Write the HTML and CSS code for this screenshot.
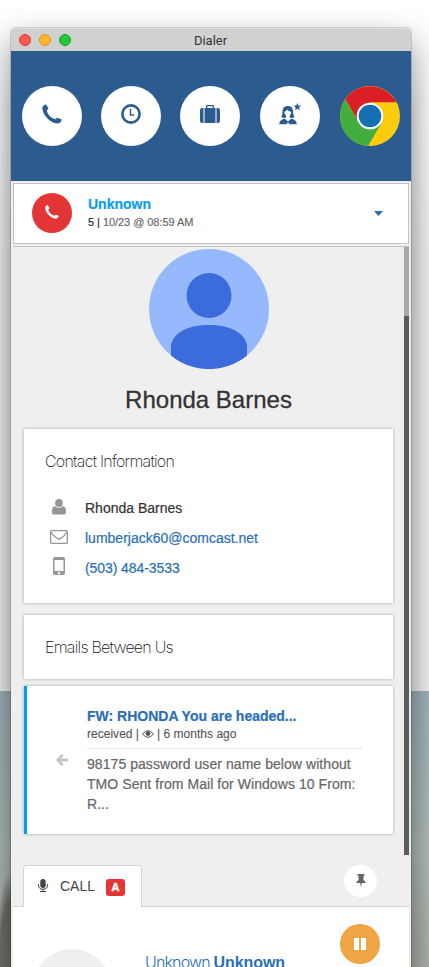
FILE: index.html
```html
<!DOCTYPE html>
<html lang="en">
<head>
<meta charset="utf-8">
<title>Dialer</title>
<link rel="stylesheet" href="styles.css">
</head>
<body>
<svg class="defs" width="0" height="0" aria-hidden="true">
  <symbol id="phone" viewBox="0 0 20 20"><path d="M.4 3.2C.7 2 2.200 .8 3.300 .5Q3.900 .3 4.400 1L6.300 4Q6.700 4.700 6 5.200L4.700 6.300Q5 9 7.600 11.900Q10.500 14.700 13.200 15.200L14.500 14.200Q15 13.700 15.700 13.900L19.300 15.200Q19.900 15.600 19.500 16.400C18.800 18.200 17.100 19.700 15 19.500C11.700 19.200 8 17 5 13.900C2 10.800 0 6.700 .4 3.200Z"/></symbol>
</svg>
<main class="window">
  <header class="titlebar">
    <div class="lights"><i class="red"></i><i class="yellow"></i><i class="green"></i></div>
    <span>Dialer</span>
  </header>
  <nav class="toolbar">
    <a class="tool"><svg width="20" height="20"><use href="#phone"/></svg></a>
    <a class="tool"><svg width="20" height="20" viewBox="0 0 20 20" fill="none" stroke="currentColor"><circle cx="10" cy="10" r="8.600" stroke-width="2.600"/><path d="M9.500 5v6H13" stroke-width="1.500"/></svg></a>
    <a class="tool case"><svg width="20" height="18" viewBox="0 0 20 18"><path d="M6 3V1.200Q6 0 7.200 0h5.600Q14 0 14 1.200V3h1.500v15h-11V3zM7.300 1.300V3h5.400V1.300zM3.500 3v15H2.300Q0 18 0 15.700V5.300Q0 3 2.300 3zM16.500 3h1.200Q20 3 20 5.300v10.400Q20 18 17.700 18h-1.200z"/></svg></a>
    <a class="tool agent"><svg width="22" height="22" viewBox="0 0 22 22"><path d="M18.300 0l1.100 2.400 2.600.3-1.900 1.800.6 2.600-2.400-1.300-2.300 1.300.6-2.600-1.900-1.800 2.500-.3zM8.800 3c3.600 0 5.200 2.200 5.300 5.500.1 2.600.5 4 1.500 5-.8 1.500-3 1.800-4.900 1v-2c1-1 1.500-2.200 1.500-3.700C10.500 8.500 8.800 7.700 8 6.500 7.500 7.700 6.500 8.500 5.400 8.800c0 1.500.5 2.700 1.600 3.700v2c-1.900.8-4 .5-4.800-1C3.300 12.500 3.500 11 3.500 8.500 3.700 5.200 5.300 3 8.800 3zM5.500 15.500L9 18.500l3.500-3 3.200 1.400Q17.800 18 17.800 21.300h-7.300L9 19.300l-1.500 2H.2Q.2 18 2.300 16.900z"/></svg></a>
    <a class="chrome"><svg width="60" height="60" viewBox="0 0 60 60"><circle cx="30" cy="30" r="30" fill="#fdcc0d"/><path d="M5.200 13.200A30 30 0 0 1 56.500 16.300H30L18 35z" fill="#dc1f26"/><path d="M5.200 13.200A30 30 0 0 0 28 60L41 38 18 35z" fill="#43ae3f"/><circle cx="30" cy="30" r="13.300" fill="#fff"/><circle cx="30" cy="30" r="11.300" fill="#146fb3"/></svg></a>
  </nav>
  <section class="recent">
    <div class="dial"><svg width="14" height="14"><use href="#phone"/></svg></div>
    <div class="recent-text"><strong>Unknown</strong><p><b>5 |</b> 10/23 @ 08:59 AM</p></div>
    <svg class="caret" width="9" height="5" viewBox="0 0 9 5"><path d="M0 0h9L4.500 5z"/></svg>
  </section>
  <div class="scroller">
    <div class="content">
      <svg class="avatar" width="120" height="120" viewBox="0 0 120 120"><circle cx="60" cy="60" r="60" fill="#95b9fc"/><circle cx="60" cy="46.500" r="22.500" fill="#3b6bdc"/><path d="M22 106.500V97C24 83 40 76 60 76s36 7 38 21v9.500A60 60 0 0 1 22 106.500z" fill="#3b6bdc"/></svg>
      <h1>Rhonda Barnes</h1>
      <section class="card contact">
        <h2>Contact Information</h2>
        <div class="row"><span class="ico"><svg class="user" width="14" height="16" viewBox="0 0 14 16"><circle cx="7" cy="4" r="3.900"/><path d="M3 7.200Q7 10.500 11 7.200Q14 7.500 14 12.700Q14 15.500 11.500 15.500h-9Q0 15.500 0 12.700Q0 7.500 3 7.200z"/></svg></span><span>Rhonda Barnes</span></div>
        <div class="row"><span class="ico"><svg class="envelope" width="18" height="14" viewBox="0 0 18 14" fill="none" stroke="currentColor" stroke-width="1.300"><rect x=".65" y=".65" width="16.700" height="12.700" rx="1.200"/><path d="M.8 2C3 5.500 7 9 9 9s6-3.500 8.200-7"/></svg></span><a>lumberjack60@comcast.net</a></div>
        <div class="row"><span class="ico"><svg class="mobile" width="12" height="18" viewBox="0 0 12 18"><path fill-rule="evenodd" d="M2 0h8q2 0 2 2v14q0 2-2 2H2q-2 0-2-2V2Q0 0 2 0zM1.500 3v11h9V3zM6 14.900a1.200 1.200 0 1 0 .01 0z"/></svg></span><a class="number">(503) 484-3533</a></div>
      </section>
      <section class="card emails"><h2>Emails Between Us</h2></section>
      <article class="card mail">
        <svg class="arrow" width="12" height="12" viewBox="0 0 12 12" fill="none" stroke="currentColor" stroke-width="2.500"><path d="M6.700 .9L1.700 6l5 5.100M2 6h10"/></svg>
        <div class="mail-body">
          <h3>FW: RHONDA You are headed...</h3>
          <p class="meta">received | <svg width="12" height="8" viewBox="0 0 12 8"><path d="M.5 4Q6-2.600 11.500 4Q6 10.600 .5 4z" fill="none" stroke="currentColor"/><circle cx="6" cy="3.600" r="2.400"/></svg> | 6 months ago</p>
          <p class="excerpt">98175 password user name below without TMO Sent from Mail for Windows 10 From: R...</p>
        </div>
      </article>
    </div>
    <div class="track"><div class="thumb"></div></div>
  </div>
  <div class="tabs">
    <div class="tab"><svg width="10" height="13" viewBox="0 0 10 13"><rect x="2.300" width="5.400" height="9" rx="2.700"/><path d="M.6 5v1.500Q.6 10.200 5 10.200T9.400 6.500V5M5 10v2.500M2 12.500h6" fill="none" stroke="currentColor"/></svg><span>CALL</span><em>A</em></div>
    <div class="pin"><svg width="10" height="14" viewBox="0 0 10 14"><path d="M1.500 0h7v1.400l-1 .5v4Q9.500 6.800 9.700 9H5.800L5 13.500 4.200 9H.3Q.5 6.800 2.500 5.900v-4l-1-.5z"/></svg></div>
  </div>
  <section class="call">
    <div class="face"></div>
    <p class="caller">Unknown <strong>Unknown</strong></p>
    <div class="pause"><i></i><i></i></div>
  </section>
</main>
</body>
</html>
```
FILE: styles.css
```css
* { box-sizing: border-box; }
body {
  margin: 0; height: 967px; padding: 28px 18px 0 11px; overflow: hidden;
  font: 14px/20px "Liberation Sans", Arial, sans-serif; color: #333;
  background:
    linear-gradient(#fff 0 80px, #f6f6f6 250px) top / 100% 691px no-repeat,
    radial-gradient(16px 95px at 11px 967px, #74746e 70%, transparent),
    linear-gradient(#a3b6bd 691px, #b4c0bc 850px, #aeb3a9 967px);
}
h1, h2, h3, p { margin: 0; }
svg { display: block; fill: currentColor; flex: none; }
svg[fill="none"] { fill: none; }
.defs { position: absolute; }
.window {
  width: 400px; height: 939px; background: #efefef; border-radius: 5px 5px 0 0;
  box-shadow: 0 0 0 1px rgba(0,0,0,.15), 0 16px 34px 2px rgba(0,0,0,.42), 0 60px 20px 0 rgba(0,0,0,.1);
}
.titlebar {
  height: 23px; background: #d1d1d1; border-radius: 5px 5px 0 0; display: grid;
  grid-template-columns: 1fr auto 1fr; align-items: center; padding: 0 9px 0 8px;
  font: 13px/23px Roboto, sans-serif; color: #333; box-shadow: inset 0 1px #ddd;
}
.titlebar span { padding-top: 1px; }
.lights { display: flex; gap: 8px; }
.lights i { width: 12px; height: 12px; border-radius: 50%; border: 1px solid #df3e39; background: #ff5850; }
.lights .yellow { background: #ffb72a; border-color: #dd961b; }
.lights .green { background: #25c638; border-color: #18a229; }
.toolbar {
  height: 130px; background: #2c5c8f; color: #2c5c8f; display: flex;
  align-items: center; gap: 19px; padding: 0 11px;
}
.tool { width: 60px; height: 60px; border-radius: 50%; background: #fff; display: grid; place-items: center; padding-bottom: 4px; }
.tool.case, .tool.agent { margin-right: 1px; }
.recent {
  margin: 2px 2px 2px; height: 61px; border: 1px solid #c3c3c3; background: #fff;
  display: flex; align-items: center; padding: 0 25px 0 18px;
}
.dial { width: 40px; height: 40px; border-radius: 50%; background: #e33535; color: #fff; display: grid; place-items: center; padding-bottom: 2px; margin-bottom: 1px; }
.recent-text { margin: 0 0 1px 16px; flex: 1; }
.recent-text strong { display: block; color: #0a9df0; font-size: 14px; line-height: 19px; -webkit-text-stroke: .2px; }
.recent-text p { font-size: 11px; line-height: 17px; color: #666; letter-spacing: -.05px; -webkit-text-stroke: .15px; }
.recent-text b { font-weight: 400; color: #222; }
.caret { color: #2b6fb2; }
.scroller { margin: 0 2px; height: 609px; border-top: 1px solid #c3c3c3; display: flex; }
.content { width: 391px; padding: 2px 11px 0; }
.avatar { margin: 0 auto; }
h1 { font-size: 24px; line-height: 30px; font-weight: 400; text-align: center; margin: 16px 0 14px; -webkit-text-stroke: .3px #333; }
.card { background: #fff; box-shadow: 0 0 3px rgba(0,0,0,.3); }
.contact { height: 174px; padding: 22px 21px; }
h2 { font: 200 16px/20px Inter, sans-serif; letter-spacing: -.75px; color: #111; }
.contact h2 { margin-bottom: 22px; }
.row { height: 30px; display: flex; align-items: center; -webkit-text-stroke: .2px; }
.ico { width: 28px; margin-right: 12px; color: #969696; display: grid; place-items: center; -webkit-text-stroke: 0; }
.user, .envelope { margin-bottom: 2px; }
.mobile { margin-bottom: 4px; }
.row a { color: #2a6fb5; }
.row .number { letter-spacing: -.08px; }
.emails { height: 64px; margin-top: 12px; padding: 22px 21px; }
.mail { height: 148px; margin-top: 7px; border-left: 3px solid #009ff2; padding: 20px 30px 0 29px; display: flex; }
.arrow { color: #c0c0c0; margin: 48px 19px 0 0; }
.mail-body { flex: 1; }
h3 { font-size: 14px; line-height: 20px; color: #2a6fb5; white-space: nowrap; -webkit-text-stroke: .2px; }
.meta { display: flex; align-items: center; gap: 3px; font-size: 12px; line-height: 16px; padding-bottom: 6px; color: #555; border-bottom: 1px solid #e7e7e7; -webkit-text-stroke: .1px; letter-spacing: .02px; }
.excerpt { width: 276px; color: #666; padding-top: 5px; letter-spacing: .06px; -webkit-text-stroke: .2px; }
.track { width: 5px; background: #5b5b5b; }
.thumb { height: 69px; background: #a8a8a8; }
.tabs { margin: 10px 2px 0; height: 42px; padding: 0 32px 0 10px; display: flex; justify-content: space-between; box-shadow: inset 0 -1px #d5d5d5; }
.tab { width: 119px; border: 1px solid #d5d5d5; border-bottom: 0; border-radius: 4px 4px 0 0; background: #fff; display: flex; align-items: center; padding-left: 14px; color: #444; }
.tab svg { margin-bottom: 2px; }
.tab span { margin: 0 10px 0 12px; padding-bottom: 1px; }
.tab em { width: 19px; height: 17px; border-radius: 3px; background: #e33535; color: #fff; font: 900 11px/17px "Liberation Sans", sans-serif; text-align: center; margin: 2px 0 0 1px; -webkit-text-stroke: .5px; }
.pin { width: 33px; height: 32px; border-radius: 50%; background: #fff; color: #666; display: grid; place-items: center; }
.call { margin: 0 2px; height: 60px; overflow: hidden; background: #fff; display: flex; align-items: flex-start; padding: 17px 29px 0 19px; }
.face { width: 80px; height: 80px; border-radius: 50%; background: #efefef; margin-top: 25px; }
.caller { flex: 1; margin: 28px 0 0 33px; white-space: nowrap; font: 300 16px/20px Inter, sans-serif; letter-spacing: -.85px; color: #2a6fb5; }
.caller strong { font: 700 16px/20px "Liberation Sans", sans-serif; letter-spacing: -.05px; }
.pause { width: 40px; height: 40px; border-radius: 50%; background: #f0a544; display: flex; align-items: center; justify-content: center; gap: 2px; padding-right: 1px; }
.pause i { width: 5px; height: 12px; background: #fff; }
```
